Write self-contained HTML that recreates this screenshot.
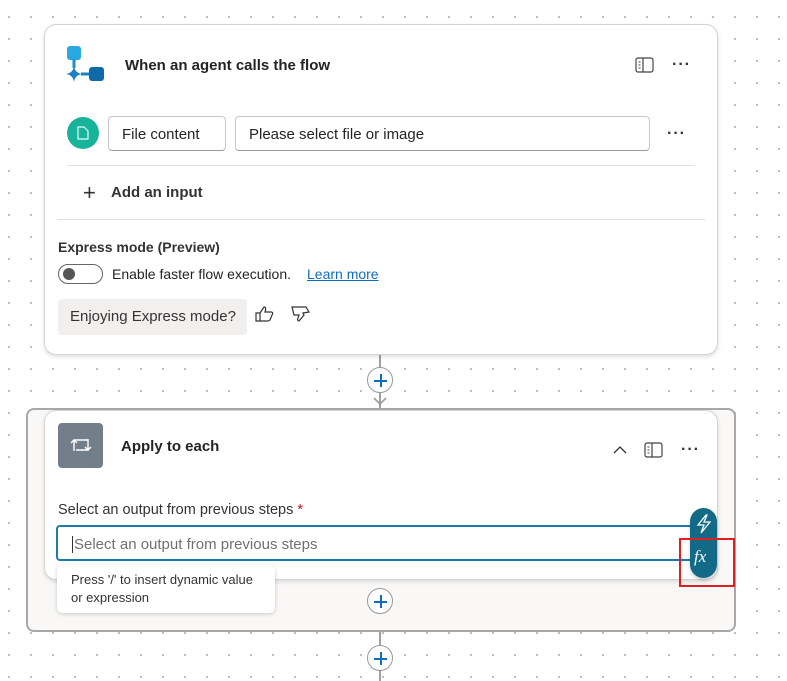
<!DOCTYPE html>
<html><head><style>
*{box-sizing:border-box;margin:0;padding:0}
body{width:787px;height:681px;overflow:hidden;position:relative;font-family:"Liberation Sans",sans-serif;color:#242424;background:#fff;background-image:radial-gradient(circle,#b8b8b8 1px,transparent 1.2px);background-size:22px 22px;background-position:-2px 6px}
.abs{position:absolute}
.card{position:absolute;background:#fff;border:1px solid #d4d4d4;border-radius:12px;box-shadow:0 2px 4px rgba(0,0,0,.12)}
.box{position:absolute;border:1px solid #c8c8c8;border-radius:4px;background:#fff;font-size:15px;padding-left:13px;line-height:35px;border-bottom-color:#999}
.plus{position:absolute;width:26px;height:26px;border:1px solid #999;border-radius:50%;background:#fff}
.plus:before{content:"";position:absolute;left:6px;top:12px;width:13px;height:1.5px;background:#0f6cbd}
.plus:after{content:"";position:absolute;left:12px;top:6px;width:1.5px;height:13px;background:#0f6cbd}
.dots{position:absolute;font-size:16px;letter-spacing:1px;color:#333;font-weight:bold}
</style></head><body>
<div class="abs" style="left:379px;top:355px;width:2px;height:53px;background:#a0a0a0"></div>
<div class="abs" style="left:379px;top:632px;width:2px;height:49px;background:#a0a0a0"></div>
<div class="plus" style="left:367px;top:367px"></div>
<svg class="abs" style="left:373px;top:396px" width="14" height="10"><path d="M1 2 L7 8 L13 2" stroke="#999" stroke-width="1.6" fill="none"/></svg>

<div class="card" style="left:44px;top:24px;width:674px;height:331px">
  <svg class="abs" style="left:20px;top:21px" width="42" height="42" viewBox="0 0 42 42">
    <rect x="2" y="0" width="14" height="14" rx="3" fill="#2aa8e0"/>
    <rect x="7.5" y="13" width="3" height="9" fill="#1e8fd0"/>
    <path d="M9 20 Q10 27 17 28 Q10 29 9 36 Q8 29 1 28 Q8 27 9 20Z" fill="#1a7fc4"/>
    <rect x="16" y="26.5" width="9" height="3" fill="#1a7fc4"/>
    <rect x="24" y="21" width="15" height="14" rx="3" fill="#116aa8"/>
  </svg>
  <div class="abs" style="left:80px;top:32px;font-size:15px;font-weight:bold">When an agent calls the flow</div>
  <svg class="abs" style="left:590px;top:32px" width="20" height="16"><rect x="1" y="1" width="17" height="14" rx="2" stroke="#444" fill="none" stroke-width="1.2"/><line x1="8" y1="1" x2="8" y2="15" stroke="#444" stroke-width="1.2"/><path d="M3.5 5h2M3.5 8h2M3.5 11h2" stroke="#444"/></svg>
  <div class="dots" style="left:627px;top:31px">···</div>
  <div class="abs" style="left:22px;top:92px;width:32px;height:32px;border-radius:50%;background:#17b39a"></div>
  <svg class="abs" style="left:32px;top:101px" width="12" height="14"><path d="M1 1h6l4 4v8H1z" fill="none" stroke="#dff" stroke-width="1.2"/></svg>
  <div class="box" style="left:63px;top:91px;width:118px;height:35px">File content</div>
  <div class="box" style="left:190px;top:91px;width:415px;height:35px">Please select file or image</div>
  <div class="dots" style="left:622px;top:100px">···</div>
  <div class="abs" style="left:22px;top:140px;width:628px;height:1px;background:#e0e0e0"></div>
  <div class="abs" style="left:38px;top:155px;font-size:22px;font-weight:300;color:#333">+</div>
  <div class="abs" style="left:66px;top:159px;font-size:15px;font-weight:bold;color:#333">Add an input</div>
  <div class="abs" style="left:12px;top:194px;width:648px;height:1px;background:#e0e0e0"></div>
  <div class="abs" style="left:13px;top:214px;font-size:14px;font-weight:bold;color:#333">Express mode (Preview)</div>
  <div class="abs" style="left:13px;top:239px;width:45px;height:20px;border:1px solid #666;border-radius:10px"><div class="abs" style="left:4px;top:3px;width:12px;height:12px;border-radius:50%;background:#555"></div></div>
  <div class="abs" style="left:67px;top:241px;font-size:14px">Enable faster flow execution.</div>
  <div class="abs" style="left:262px;top:241px;font-size:14px;color:#0f6cbd;text-decoration:underline">Learn more</div>
  <div class="abs" style="left:13px;top:274px;width:189px;height:36px;background:#f1f0ef;border-radius:4px;font-size:15px;line-height:36px;padding-left:12px;color:#333">Enjoying Express mode?</div>
  <svg class="abs" style="left:210px;top:280px" width="20" height="18"><path d="M1 8h4v8H1zM5 8l4-6c2 0 2 2 1 5h6c2 0 2 2 1 3l-2 5c-1 1-2 1-3 1H5" fill="none" stroke="#333" stroke-width="1.2"/></svg>
  <svg class="abs" style="left:246px;top:280px" width="20" height="18"><path d="M1 2h14l3 5-6 1 1 2-5 6c-1 0-2-1-1-3l1-3H3z" fill="none" stroke="#333" stroke-width="1.2"/></svg>
</div>

<div class="abs" style="left:26px;top:408px;width:710px;height:224px;border:2px solid #a8a8a8;border-radius:8px;background:#f9f8f7"></div>
<div class="card" style="left:44px;top:410px;width:674px;height:170px">
  <div class="abs" style="left:13px;top:12px;width:45px;height:45px;border-radius:4px;background:#737e8b"></div>
  <svg class="abs" style="left:25px;top:24px" width="22" height="20"><path d="M4 16V5h14M4 5l-3 3M4 5l3 3" fill="none" stroke="#fff" stroke-width="1.4"/><path d="M18 4v11H6M18 15l-3-3M18 15l3-3" fill="none" stroke="#fff" stroke-width="1.4"/></svg>
  <div class="abs" style="left:76px;top:27px;font-size:15px;font-weight:bold">Apply to each</div>
  <svg class="abs" style="left:567px;top:34px" width="16" height="10"><path d="M2 8l6-6 6 6" fill="none" stroke="#333" stroke-width="1.3"/></svg>
  <svg class="abs" style="left:599px;top:31px" width="20" height="16"><rect x="1" y="1" width="17" height="14" rx="2" stroke="#444" fill="none" stroke-width="1.2"/><line x1="8" y1="1" x2="8" y2="15" stroke="#444" stroke-width="1.2"/><path d="M3.5 5h2M3.5 8h2M3.5 11h2" stroke="#444"/></svg>
  <div class="dots" style="left:636px;top:30px">···</div>
  <div class="abs" style="left:13px;top:91px;font-size:14.5px;color:#333">Select an output from previous steps <span style="color:#c50f1f">*</span></div>
</div>
<div class="abs" style="left:56px;top:525px;width:640px;height:36px;border:2px solid #1c7aa8;border-radius:4px;background:#fff;font-size:15px;line-height:36px;padding-left:14px;color:#707070"><span style="border-left:1px solid #333;margin-right:1px"></span>Select an output from previous steps</div>
<div class="abs" style="left:690px;top:508px;width:27px;height:70px;border-radius:14px;background:#126a86;box-shadow:0 2px 3px rgba(0,0,0,.2)"></div>
<svg class="abs" style="left:695px;top:514px" width="18" height="20"><path d="M11 1L3 11h6l-3 8 9-11H9l3-7z" fill="none" stroke="#fff" stroke-width="1.3"/></svg>
<div class="abs" style="left:694px;top:547px;font-family:'Liberation Serif',serif;font-style:italic;font-size:17px;color:#fff">fx</div>
<div class="abs" style="left:679px;top:538px;width:56px;height:49px;border:2px solid #e02020"></div>
<div class="abs" style="left:57px;top:565px;width:218px;height:48px;background:#fff;border-radius:5px;box-shadow:0 1px 4px rgba(0,0,0,.2);font-size:13px;line-height:18px;padding:6px 14px;color:#333">Press '/' to insert dynamic value or expression</div>
<div class="plus" style="left:367px;top:588px"></div>
<div class="plus" style="left:367px;top:645px"></div>
</body></html>
